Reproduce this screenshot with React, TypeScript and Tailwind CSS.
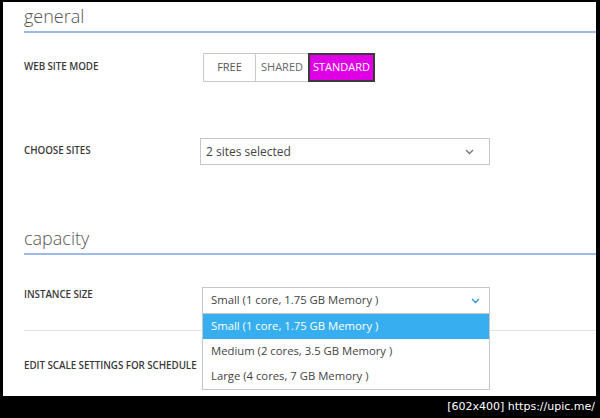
import React from 'react';

const ui = { fontFamily: '"Open Sans", "Noto Sans", sans-serif' };

const Chevron = ({ color }: { color: string }) => (
  <svg width="9" height="6" viewBox="0 0 9 6" fill="none">
    <polyline points="1,1 4.5,4.5 8,1" stroke={color} strokeWidth="1.3" />
  </svg>
);

const Label = ({ children }: { children: React.ReactNode }) => (
  <div className="w-[179px] shrink-0 text-[9.8px] font-semibold tracking-[-0.05px] text-[#3a3a3a]">{children}</div>
);

const Heading = ({ children }: { children: React.ReactNode }) => (
  <div className="h-[31px] border-b-2 border-[#9dbbe6] pt-[2px] text-[18px] font-light leading-[24px] text-[#555]">{children}</div>
);

export default function App() {
  const sizes = [
    'Small (1 core, 1.75 GB Memory )',
    'Medium (2 cores, 3.5 GB Memory )',
    'Large (4 cores, 7 GB Memory )',
  ];

  return (
    <div className="flex h-[418px] w-[600px] flex-col bg-black" style={ui}>
      <div className="ml-[3px] mr-[4px] mt-[2px] h-[394px] bg-white pl-[21px]">
        <Heading>general</Heading>

        {/* web site mode */}
        <div className="mt-[20px] flex h-[29px] items-center">
          <Label>WEB SITE MODE</Label>
          <div className="flex h-[29px] text-[11px]">
            <div className="flex w-[53px] items-center justify-center border border-[#c9c9c9] text-[#555]">FREE</div>
            <div className="flex w-[52px] items-center justify-center border-y border-[#c9c9c9] text-[#666]">SHARED</div>
            <div className="flex w-[67px] items-center justify-center border-2 border-[#3a3a3a] bg-[#e000e6] text-white">STANDARD</div>
          </div>
        </div>

        {/* choose sites */}
        <div className="mt-[56px] flex h-[27px] items-center">
          <Label>CHOOSE SITES</Label>
          <div className="-ml-[3px] flex h-[27px] w-[290px] items-center justify-between border border-[#c6c6c6] pl-[5px] pr-[15px] text-[12px] text-[#444]">
            <span>2 sites selected</span>
            <Chevron color="#777" />
          </div>
        </div>

        <div className="mt-[59px]">
          <Heading>capacity</Heading>
        </div>

        {/* instance size */}
        <div className="flex h-[76px] border-b border-[#e3e3e3] pt-[32px]">
          <Label>
            <div className="pt-[1px]">INSTANCE SIZE</div>
          </Label>
          <div className="relative -ml-[1px] h-[27px] w-[288px]">
            <div className="flex h-[27px] items-center justify-between border border-[#c6c6c6] pl-[8px] pr-[9px] text-[11.3px] text-[#444]">
              <span>{sizes[0]}</span>
              <Chevron color="#2e8fd8" />
            </div>
            <div className="absolute left-0 top-[27px] z-10 w-[288px] border border-t-0 border-[#c6c6c6] bg-white text-[11.3px]">
              {sizes.map((s, i) => (
                <div
                  key={s}
                  className={`flex h-[25px] items-center pl-[8px] ${i === 0 ? 'bg-[#37aef0] text-white' : 'text-[#444]'}`}
                >
                  {s}
                </div>
              ))}
            </div>
          </div>
        </div>

        <div className="mt-[27px] flex h-[16px] items-center">
          <Label>EDIT SCALE SETTINGS FOR SCHEDULE</Label>
        </div>
      </div>

      <div className="flex flex-1 items-center justify-end pr-[5px] pt-[1px] text-[11px] text-white" style={{ fontFamily: '"DejaVu Sans", sans-serif' }}>
        [602x400] https://upic.me/
      </div>
    </div>
  );
}
